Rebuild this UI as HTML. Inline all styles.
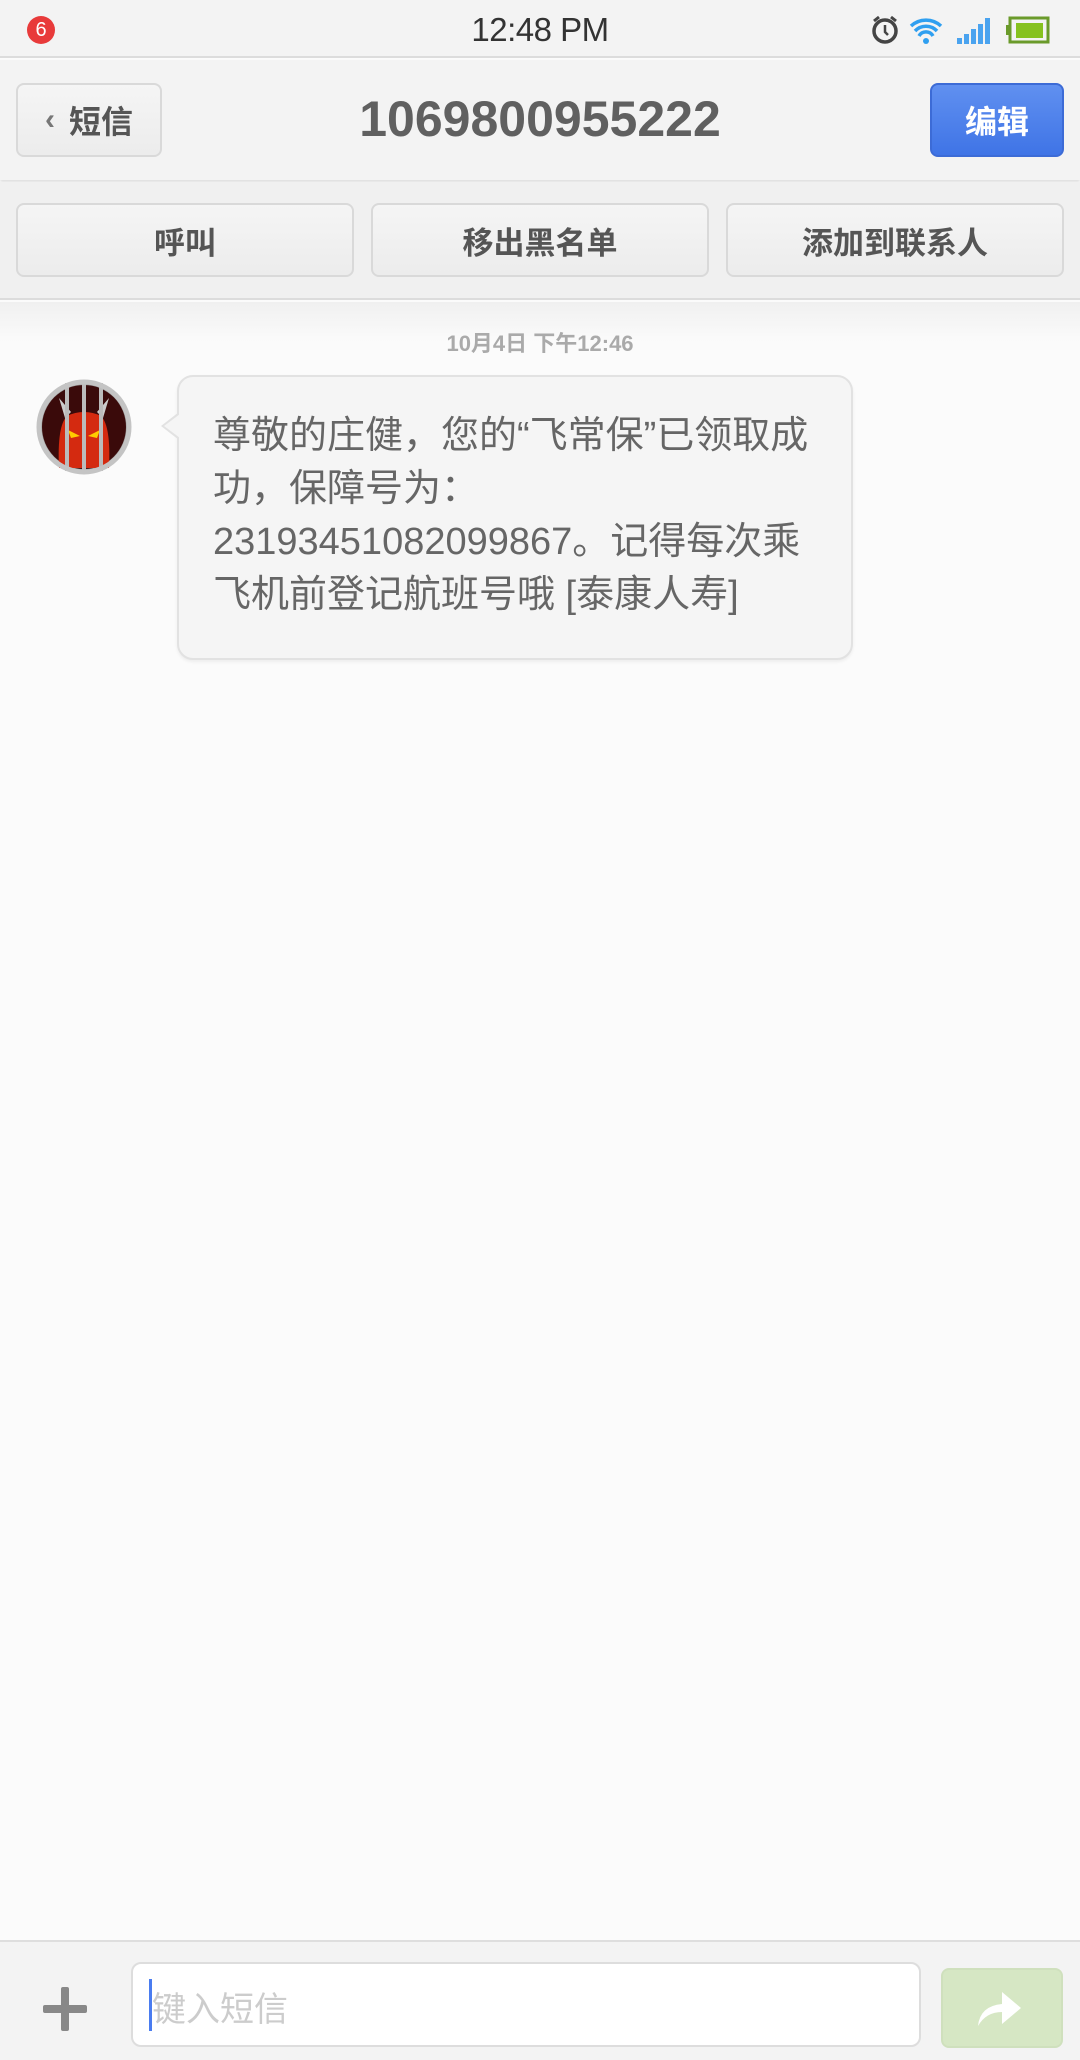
<!DOCTYPE html>
<html><head><meta charset="utf-8">
<style>
*{margin:0;padding:0;box-sizing:border-box}
body{width:1080px;height:2060px;background:#fbfbfb;font-family:"Liberation Sans","Noto Sans CJK SC",sans-serif;position:relative;overflow:hidden;color:#555}
.abs{position:absolute}
.status{left:0;top:0;width:1080px;height:58px;background:#f3f3f3;border-bottom:2px solid #dcdcdc}
.nav{left:0;top:60px;width:1080px;height:120px;background:#f3f3f3;box-shadow:0 2px 3px rgba(0,0,0,.12)}
.acts{left:0;top:182px;width:1080px;height:118px;background:#f0f0f0;border-bottom:2px solid #dcdcdc}
.btn{position:absolute;border:2px solid #d9d9d9;border-radius:8px;background:linear-gradient(#f5f5f5,#ececec);display:flex;align-items:center;justify-content:center;font-weight:bold;color:#555}
.bubble{left:177px;top:375px;width:676px;height:285px;background:#f5f5f5;border:2px solid #e2e2e2;border-radius:16px;box-shadow:0 2px 3px rgba(0,0,0,.06)}
.msg{left:213px;top:410px;width:640px;font-size:38px;line-height:53px;color:#666;white-space:nowrap}
.bottom{left:0;top:1940px;width:1080px;height:120px;background:#f3f3f3;border-top:2px solid #dedede}
</style></head><body>
<div class="abs status"></div>
<div class="abs" style="left:27px;top:16px;width:28px;height:28px;border-radius:50%;background:#e83a3a;color:#fff;font-size:20px;text-align:center;line-height:28px">6</div>
<div class="abs" style="left:0;width:1080px;top:11px;text-align:center;font-size:33px;color:#333;letter-spacing:-0.5px">12:48 PM</div>
<svg class="abs" style="left:868px;top:14px" width="190" height="32" viewBox="0 0 190 32">
<circle cx="17" cy="17" r="11" fill="none" stroke="#444" stroke-width="3.5"/><path d="M17 11v7l3 3" stroke="#444" stroke-width="2.5" fill="none"/><path d="M6 7l5-4M28 7l-5-4" stroke="#444" stroke-width="3"/>
<path d="M43 12a22 22 0 0 1 30 0M47 17a15 15 0 0 1 22 0M51 22a8 8 0 0 1 14 0" stroke="#2f9ff0" stroke-width="3.5" fill="none"/><circle cx="58" cy="27" r="3" fill="#2f9ff0"/>
<rect x="89" y="24" width="5" height="6" fill="#4aa3ef"/><rect x="96" y="20" width="5" height="10" fill="#4aa3ef"/><rect x="103" y="15" width="5" height="15" fill="#4aa3ef"/><rect x="110" y="10" width="5" height="20" fill="#4aa3ef"/><rect x="117" y="4" width="5" height="26" fill="#4aa3ef"/>
<rect x="142" y="4" width="38" height="24" fill="none" stroke="#6a9a2a" stroke-width="3"/><rect x="138" y="11" width="4" height="10" fill="#6a9a2a"/><rect x="148" y="9" width="27" height="15" fill="#86c21f"/>
</svg>
<div class="abs nav"></div>
<div class="btn" style="left:16px;top:83px;width:146px;height:74px;font-size:32px;font-weight:bold"><span style="font-size:30px;margin-right:14px;color:#777">&lsaquo;</span>短信</div>
<div class="abs" style="left:0;width:1080px;top:90px;text-align:center;font-size:50px;font-weight:bold;color:#606060">1069800955222</div>
<div class="btn" style="left:930px;top:83px;width:134px;height:74px;background:linear-gradient(#6090f0,#3f74e6);border-color:#3c6bd6;color:#fff;font-size:32px">编辑</div>
<div class="abs acts"></div>
<div class="btn" style="left:16px;top:203px;width:338px;height:74px;font-size:31px">呼叫</div>
<div class="btn" style="left:371px;top:203px;width:338px;height:74px;font-size:31px">移出黑名单</div>
<div class="btn" style="left:726px;top:203px;width:338px;height:74px;font-size:31px">添加到联系人</div>
<div class="abs" style="left:0;top:302px;width:1080px;height:40px;background:linear-gradient(#f0f0f0,#fbfbfb)"></div>
<div class="abs" style="left:0;width:1080px;top:326px;text-align:center;font-size:22px;color:#aaa;font-weight:bold">10月4日 下午12:46</div>
<svg class="abs" style="left:35px;top:378px" width="98" height="98" viewBox="0 0 98 98">
<circle cx="49" cy="49" r="47" fill="#999"/><circle cx="49" cy="49" r="42" fill="#3a0a0a"/>
<path d="M24 90 Q22 48 32 38 Q40 34 49 34 Q58 34 66 38 Q76 48 74 90Z" fill="#d42a10"/>
<path d="M30 40 L24 20 L36 34Z M68 40 L74 20 L62 34Z" fill="#ccc"/>
<path d="M33 52 L45 58 L36 60Z M65 52 L53 58 L62 60Z" fill="#ffcc00"/>
<rect x="30" y="5" width="4" height="88" fill="#bbb"/><rect x="47" y="3" width="4" height="92" fill="#bbb"/><rect x="64" y="5" width="4" height="88" fill="#bbb"/>
<circle cx="49" cy="49" r="45" fill="none" stroke="#c4c4c4" stroke-width="5"/>
</svg>
<div class="abs bubble"></div>
<div class="abs" style="left:161px;top:412px;width:0;height:0;border-top:14px solid transparent;border-bottom:14px solid transparent;border-right:18px solid #e2e2e2"></div>
<div class="abs" style="left:164px;top:414px;width:0;height:0;border-top:12px solid transparent;border-bottom:12px solid transparent;border-right:16px solid #f5f5f5"></div>
<div class="abs msg">尊敬的庄健，您的“飞常保”已领取成<br>功，保障号为：<br>23193451082099867。记得每次乘<br>飞机前登记航班号哦 [泰康人寿]</div>
<div class="abs bottom"></div>
<div class="abs" style="left:43px;top:2005px;width:44px;height:8px;background:#888;border-radius:2px"></div>
<div class="abs" style="left:61px;top:1987px;width:8px;height:44px;background:#888;border-radius:2px"></div>
<div class="abs" style="left:131px;top:1962px;width:790px;height:85px;background:#fff;border:2px solid #ddd;border-radius:10px"></div>
<div class="abs" style="left:149px;top:1979px;width:3px;height:52px;background:#4a7cf0"></div>
<div class="abs" style="left:152px;top:1982px;font-size:34px;color:#ccc">键入短信</div>
<div class="abs" style="left:941px;top:1968px;width:122px;height:80px;background:#d6e7c4;border:2px solid #cfe0bd;border-radius:8px"></div>
<svg class="abs" style="left:976px;top:1988px" width="50" height="40" viewBox="0 0 50 40"><path d="M2 38 Q4 18 26 16 L26 4 L45 20 L26 36 L26 24 Q10 24 2 38Z" fill="#fff"/></svg>
</body></html>
